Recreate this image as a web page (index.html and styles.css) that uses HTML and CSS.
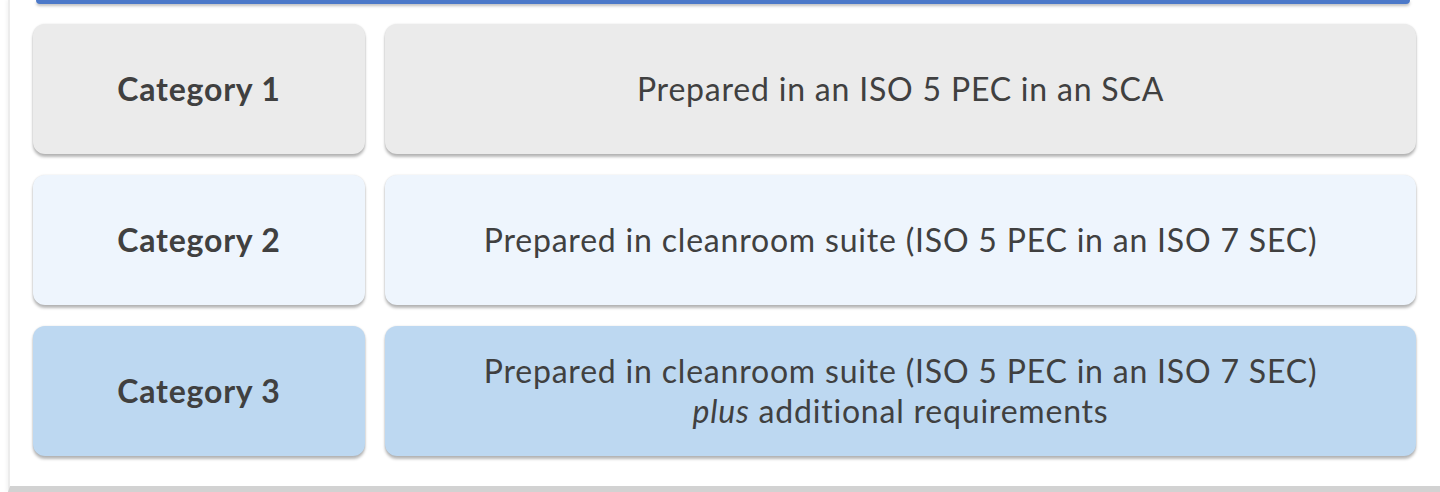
FILE: index.html
```html
<!DOCTYPE html>
<html lang="en">
<head>
<meta charset="utf-8">
<title>Categories</title>
<link rel="stylesheet" href="styles.css">
</head>
<body>
<div class="frame">
  <div class="topbar"></div>
  <div class="grid">
    <div class="card cat c1"><span>Category 1</span></div>
    <div class="card desc c1"><span>Prepared in an ISO 5 PEC in an SCA</span></div>
    <div class="card cat c2"><span>Category 2</span></div>
    <div class="card desc c2"><span>Prepared in cleanroom suite (ISO 5 PEC in an ISO 7 SEC)</span></div>
    <div class="card cat c3"><span>Category 3</span></div>
    <div class="card desc c3"><span>Prepared in cleanroom suite (ISO 5 PEC in an ISO 7 SEC)<br><em>plus</em> additional requirements</span></div>
  </div>
</div>
</body>
</html>
```
FILE: styles.css
```css
html, body {
  margin: 0;
  padding: 0;
  background: #ffffff;
}
body {
  width: 1440px;
  height: 492px;
  overflow: hidden;
  font-family: "Lato", "Open Sans", sans-serif;
  color: #404040;
}
.frame {
  margin-left: 8px;
  border-left: 2px solid #ececec;
  border-bottom: 6px solid #d2d2d2;
  padding-bottom: 30px;
  box-sizing: border-box;
  height: 492px;
  box-shadow: -2px 0 3px rgba(0,0,0,0.04);
}
.topbar {
  height: 4px;
  margin: 0 30px 0 26px;
  background: #4c79c9;
  border-radius: 0 0 8px 8px;
  box-shadow: 0 2px 3px rgba(0,0,0,0.25);
}
.grid {
  display: grid;
  grid-template-columns: 332px 1031px;
  grid-auto-rows: 130px;
  column-gap: 20px;
  row-gap: 21px;
  padding: 20px 0 0 23px;
}
.card {
  border-radius: 12px;
  box-shadow: 0 3px 3px rgba(0,0,0,0.28), 0 0 2px rgba(0,0,0,0.12);
  display: flex;
  align-items: center;
  justify-content: center;
  text-align: center;
  font-size: 32px;
  line-height: 40px;
  letter-spacing: 0.8px;
}
.cat {
  font-weight: 700;
}
.c1 { background: #ebebeb; }
.c2 { background: #eef5fd; }
.c3 { background: #bdd8f1; }
em { font-style: italic; }
```
